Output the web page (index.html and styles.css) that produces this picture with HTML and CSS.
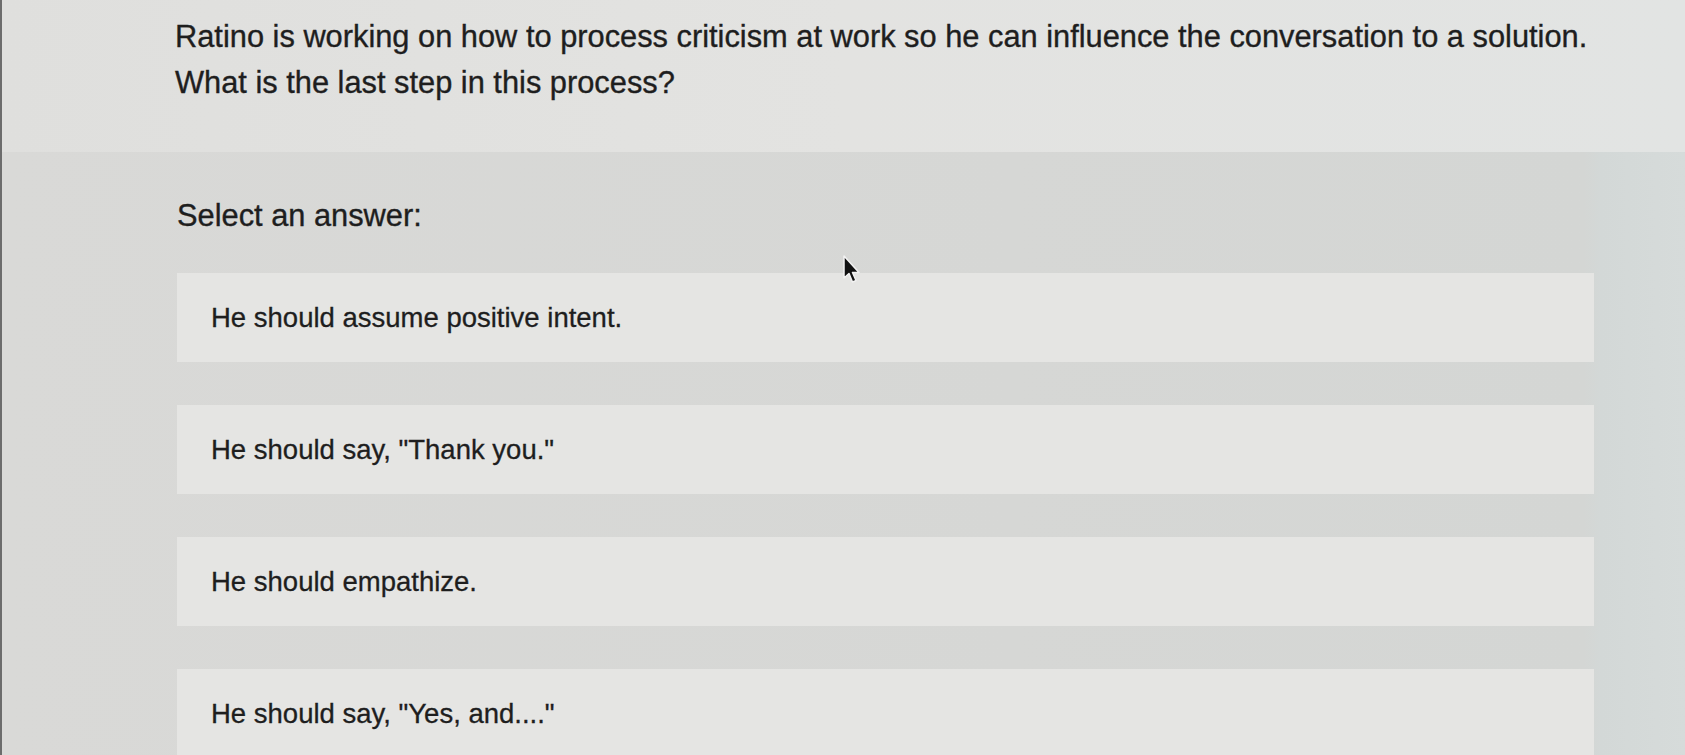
FILE: index.html
```html
<!DOCTYPE html>
<html lang="en">
<head>
<meta charset="utf-8">
<title>Quiz question</title>
<link rel="stylesheet" href="styles.css">
</head>
<body>
<div class="page">
  <section class="question">
    <p class="prompt">Ratino is working on how to process criticism at work so he can influence the conversation to a solution.<br>What is the last step in this process?</p>
  </section>
  <section class="answers">
    <h2 class="select">Select an answer:</h2>
    <ul class="choices">
      <li class="choice">He should assume positive intent.</li>
      <li class="choice">He should say, "Thank you."</li>
      <li class="choice">He should empathize.</li>
      <li class="choice">He should say, "Yes, and...."</li>
    </ul>
  </section>
  <svg class="cursor" width="20" height="30" viewBox="0 0 20 30" aria-hidden="true">
    <path d="M2 1 L2 23 L7 18.5 L10.5 27 L14 25.5 L10.5 17.5 L17 17.5 Z" fill="#111" stroke="#f2f2f2" stroke-width="1.5" stroke-linejoin="round"/>
  </svg>
</div>
</body>
</html>
```
FILE: styles.css
```css
html, body {
  margin: 0;
  padding: 0;
}
body {
  background: #d8d9d7;
  font-family: "Liberation Sans", Arial, Helvetica, sans-serif;
  color: #1e1e1e;
  overflow: hidden;
}
.page {
  position: relative;
  width: 1685px;
  height: 755px;
  overflow: hidden;
  border-left: 2px solid #6c6c6c;
  box-sizing: border-box;
  display: flex;
  flex-direction: column;
}
.question {
  background: linear-gradient(90deg, #dfdfdd 0%, #e3e3e1 50%, #e2e4e3 100%);
  padding: 14px 0 46px 173px;
}
.prompt {
  margin: 0;
  font-size: 30.8px;
  line-height: 46px;
  -webkit-text-stroke: 0.35px #1e1e1e;
}
.answers {
  flex: 1;
  background: linear-gradient(90deg, #d9d9d7 0%, #d6d7d5 60%, #d4d6d4 94%, #d3d8d7 95%, #d6dbda 100%);
  padding: 41px 0 0 175px;
}
.select {
  margin: 0;
  font-size: 30.8px;
  font-weight: normal;
  line-height: 46px;
  -webkit-text-stroke: 0.35px #1e1e1e;
}
.choices {
  list-style: none;
  margin: 34px 0 0;
  padding: 0;
  width: 1417px;
  display: flex;
  flex-direction: column;
  gap: 43px;
}
.choice {
  flex: none;
  background: #e5e5e3;
  height: 89px;
  padding-left: 34px;
  display: flex;
  align-items: center;
  font-size: 27.5px;
  -webkit-text-stroke: 0.3px #1e1e1e;
}
.cursor {
  position: absolute;
  left: 840px;
  top: 255px;
}
```
